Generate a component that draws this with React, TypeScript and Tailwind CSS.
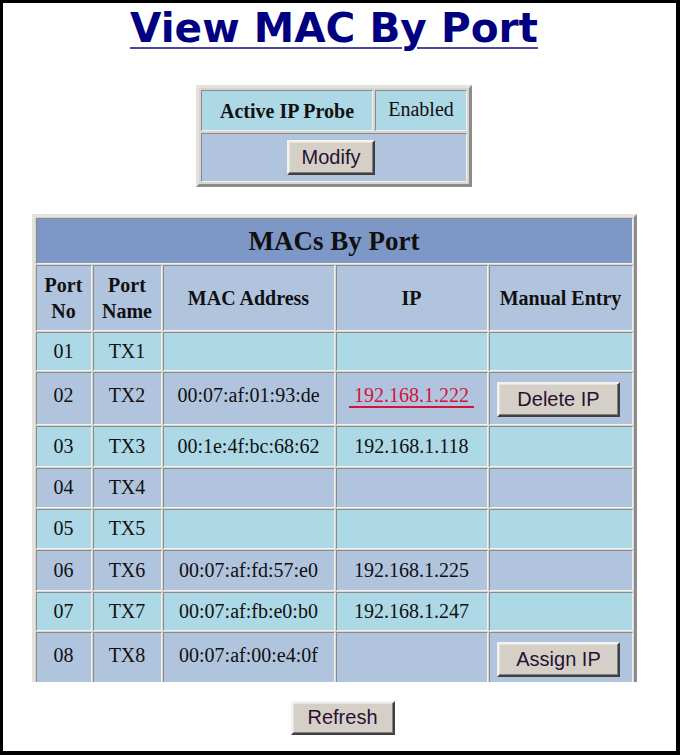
import React from "react";

const serif = { fontFamily: '"Liberation Serif", "Times New Roman", serif' };

function Btn({ children, className = "" }: { children: React.ReactNode; className?: string }) {
  return (
    <button
      className={
        "bg-[#d4d0c8] border-2 border-t-[#f4f2ee] border-l-[#f4f2ee] border-b-[#404040] border-r-[#404040] shadow-[inset_-1px_-1px_0_#808080,inset_1px_1px_0_#e6e3dd] text-[20px] leading-none text-[#2a1030] " +
        className
      }
      style={{ fontFamily: '"Liberation Sans", Arial, sans-serif' }}
    >
      {children}
    </button>
  );
}

const cell =
  "border border-t-[#8a8a8a] border-l-[#8a8a8a] border-b-[#f2f2f2] border-r-[#f2f2f2] text-center align-middle p-0";

type Row = { no: string; name: string; mac: string; ip: string; link?: boolean; btn?: string; h: string };

const rows: Row[] = [
  { no: "01", name: "TX1", mac: "", ip: "", h: "h-[39px]" },
  { no: "02", name: "TX2", mac: "00:07:af:01:93:de", ip: "192.168.1.222", link: true, btn: "Delete IP", h: "h-[53px]" },
  { no: "03", name: "TX3", mac: "00:1e:4f:bc:68:62", ip: "192.168.1.118", h: "h-[41px]" },
  { no: "04", name: "TX4", mac: "", ip: "", h: "h-[40px]" },
  { no: "05", name: "TX5", mac: "", ip: "", h: "h-[40px]" },
  { no: "06", name: "TX6", mac: "00:07:af:fd:57:e0", ip: "192.168.1.225", h: "h-[41px]" },
  { no: "07", name: "TX7", mac: "00:07:af:fb:e0:b0", ip: "192.168.1.247", h: "h-[39px]" },
  { no: "08", name: "TX8", mac: "00:07:af:00:e4:0f", ip: "", btn: "Assign IP", h: "h-[53px]" },
];

export default function App() {
  return (
    <div className="w-[680px] h-[755px] bg-white border-t-[3px] border-l-[3px] border-r-[4px] border-b-[4px] border-black overflow-hidden">
      <div className="w-[662px] flex flex-col items-center">
        <h1
          className="mt-[2px] text-[40.6px] font-bold leading-[46px] text-[#000080] underline overline decoration-2 decoration-[#4a4a9c] underline-offset-[5px]"
          style={{ fontFamily: '"DejaVu Sans", Verdana, sans-serif' }}
        >
          View MAC By Port
        </h1>

        <table
          className="mt-[34px] border-separate border-spacing-[2px] bg-[#d8d5cf] border-[3px] border-t-[#e4e2dc] border-l-[#e4e2dc] border-b-[#8c8c8c] border-r-[#8c8c8c] text-[20px] text-[#101010]"
          style={serif}
        >
          <tbody>
            <tr>
              <td className={cell + " bg-[#add8e6] w-[172px] h-[41px] font-bold"}>Active IP Probe</td>
              <td className={cell + " bg-[#add8e6] w-[92px] h-[41px] pb-[4px]"}>Enabled</td>
            </tr>
            <tr>
              <td colSpan={2} className={cell + " bg-[#b0c4de] h-[49px]"}>
                <Btn className="w-[88px] h-[35px] pb-[2px] mr-[6px]">Modify</Btn>
              </td>
            </tr>
          </tbody>
        </table>

        <div className="mt-[27px] h-[468px] overflow-hidden">
          <table
            className="border-separate border-spacing-[1px] bg-[#d8d5cf] border-[3px] border-b-0 border-t-[#e4e2dc] border-l-[#e4e2dc] border-r-[#8c8c8c] text-[20px] text-[#101010]"
            style={serif}
          >
            <tbody>
              <tr>
                <td colSpan={5} className={cell + " bg-[#7d98c7] h-[46px] text-[27px] font-bold"}>
                  MACs By Port
                </td>
              </tr>
              <tr className="font-bold bg-[#b0c4de] leading-[26px]">
                <td className={cell + " w-[56px] h-[66px]"}>
                  Port
                  <br />
                  No
                </td>
                <td className={cell + " w-[69px]"}>
                  Port
                  <br />
                  Name
                </td>
                <td className={cell + " w-[172px]"}>MAC Address</td>
                <td className={cell + " w-[152px]"}>IP</td>
                <td className={cell + " w-[144px]"}>Manual Entry</td>
              </tr>
              {rows.map((r, i) => {
                const bg = i % 2 === 0 ? "bg-[#add8e6]" : "bg-[#b0c4de]";
                const tp = r.btn ? "pb-[8px]" : "pb-[2px]";
                return (
                  <tr key={r.no} className={bg}>
                    <td className={cell + " " + r.h + " " + tp}>{r.no}</td>
                    <td className={cell + " " + tp}>{r.name}</td>
                    <td className={cell + " " + tp}>{r.mac}</td>
                    <td className={cell + " " + tp}>
                      {r.link ? (
                        <a className="text-[#d0143c] underline decoration-[#d0143c] underline-offset-[4px] whitespace-pre">
                          {" " + r.ip + " "}
                        </a>
                      ) : (
                        r.ip
                      )}
                    </td>
                    <td className={cell}>
                      {r.btn ? <Btn className="w-[123px] h-[35px] pb-[2px] mt-[2px] mr-[4px]">{r.btn}</Btn> : null}
                    </td>
                  </tr>
                );
              })}
            </tbody>
          </table>
        </div>
      </div>
      <div className="w-[674px] flex justify-center mt-[19px] pl-[5px]">
        <Btn className="w-[104px] h-[34px] pb-[2px]">Refresh</Btn>
      </div>
    </div>
  );
}
